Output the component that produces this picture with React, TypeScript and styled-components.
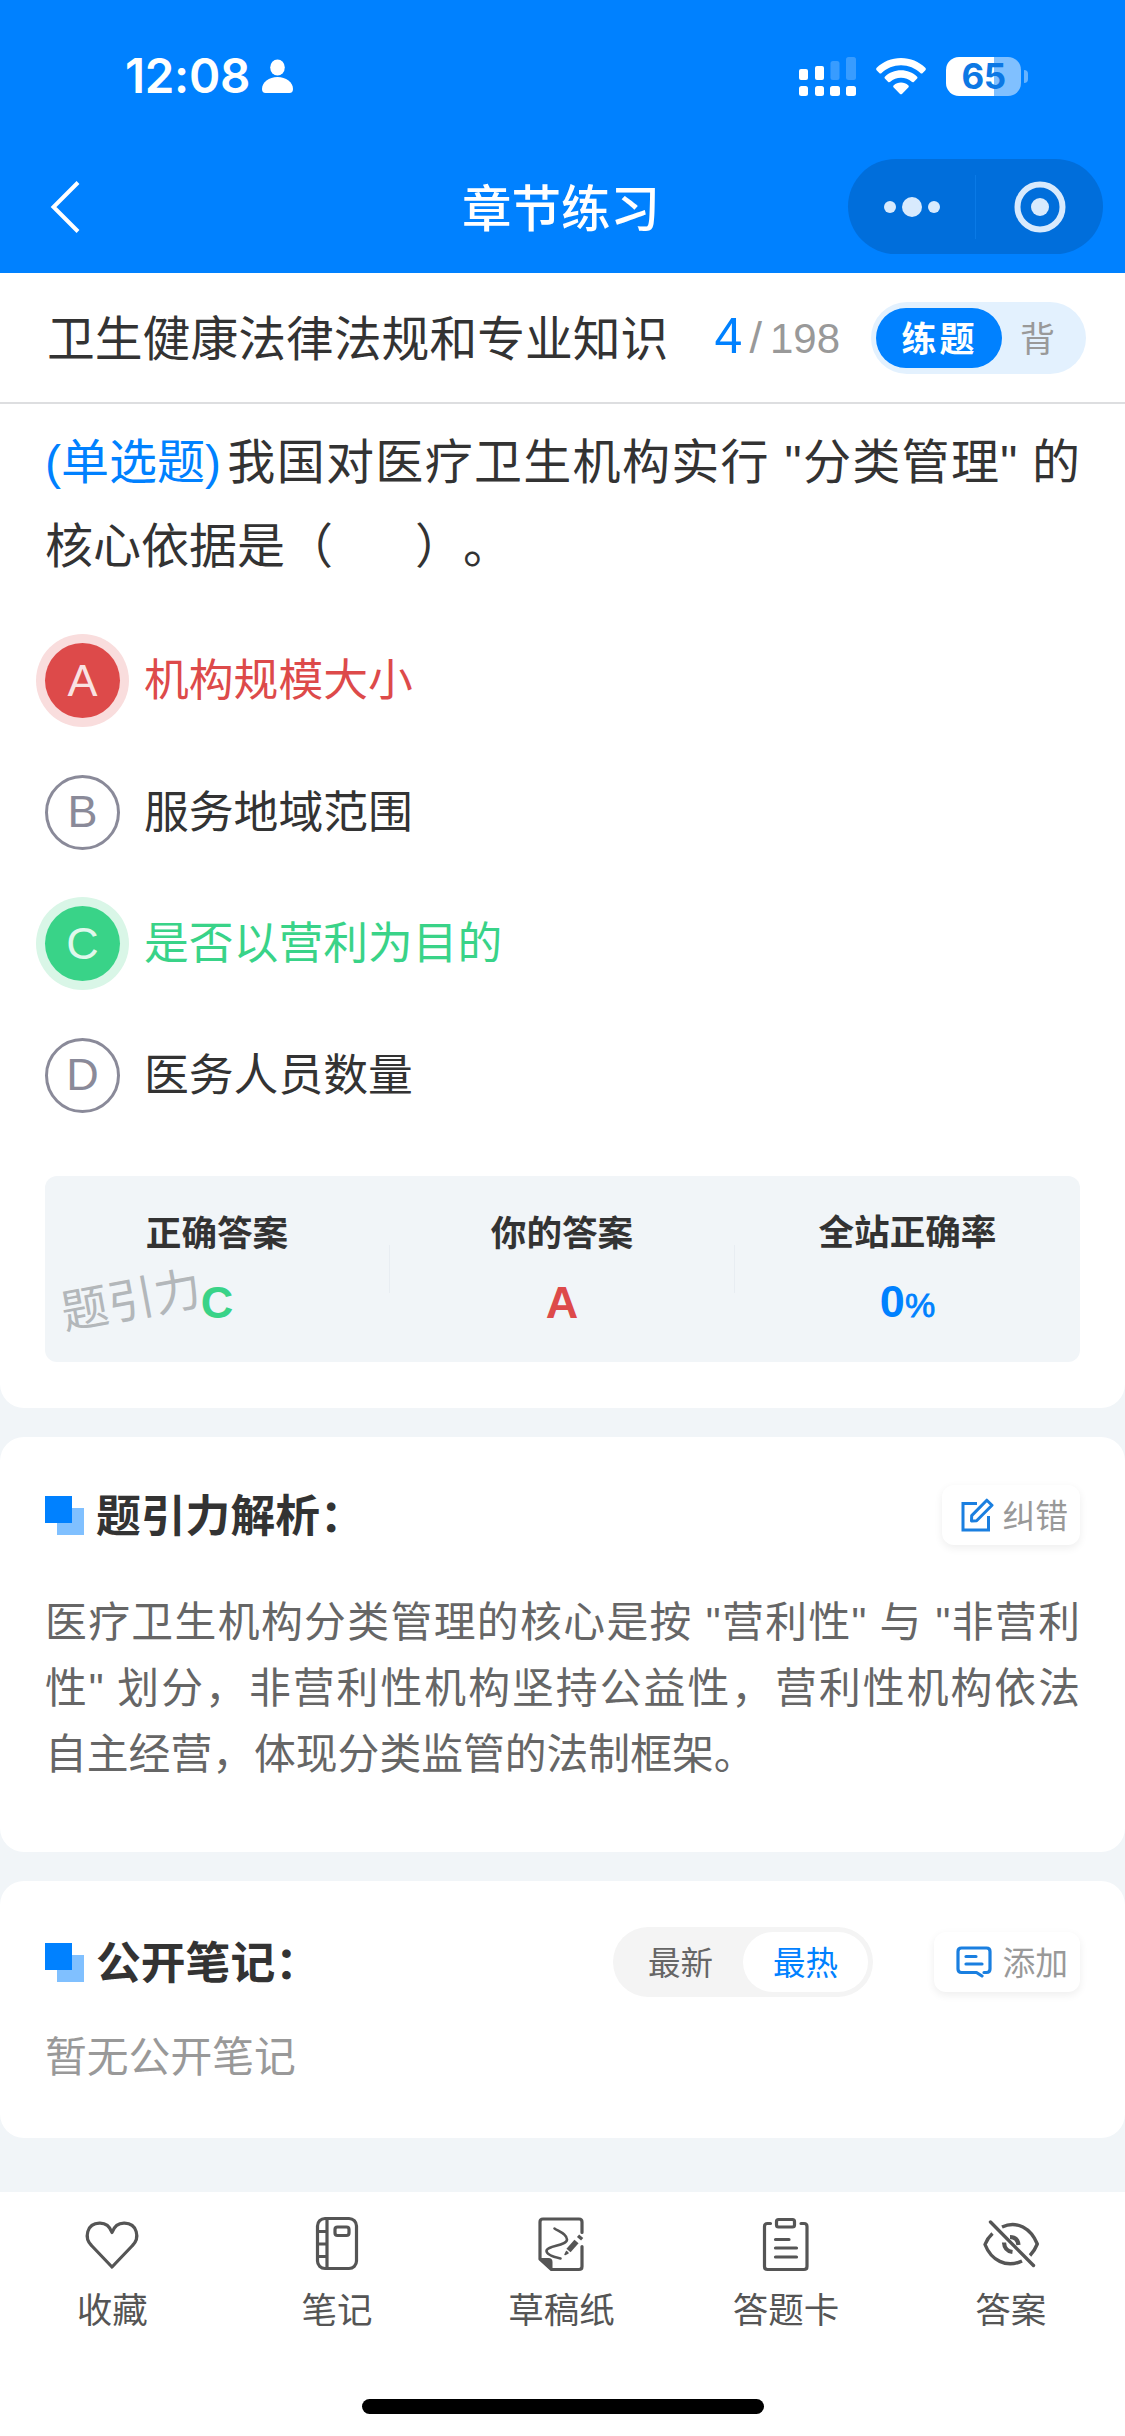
import React from 'react';
import styled, { createGlobalStyle, css } from 'styled-components';

const blue = '#0081ff';
const red = '#dd4a4a';
const green = '#39d388';

const GlobalStyle = createGlobalStyle`
  * { box-sizing: border-box; }
  body {
    margin: 0;
    background: #f1f5f8;
    font-family: 'Noto Sans CJK SC', 'Liberation Sans', sans-serif;
    text-spacing-trim: space-all;
    color: #333;
  }
`;

const Screen = styled.div`
  width: 1125px;
  height: 2436px;
  display: flex;
  flex-direction: column;
  overflow: hidden;
`;

const Header = styled.header`
  height: 273px;
  background: ${blue};
  color: #fff;
`;

const StatusBar = styled.div`
  height: 159px;
  padding: 0 97px 7px 125px;
  display: flex;
  align-items: center;
`;

const Clock = styled.span`
  font: 600 47.5px/56px Inter, sans-serif;
  letter-spacing: -0.3px;
  margin-right: 12px;
`;

const StatusIcons = styled.div`
  margin-left: auto;
  display: flex;
  align-items: center;
  gap: 20px;
`;

const Battery = styled.div`
  width: 75px;
  height: 39px;
  border-radius: 13px;
  background: linear-gradient(90deg, #fff 64%, #80c0ff 64%);
  color: #0c78e4;
  font: 700 35px/39px Inter, sans-serif;
  letter-spacing: -0.5px;
  text-align: center;
`;

const BatteryGroup = styled.div`
  display: flex;
  align-items: center;
  gap: 3px;
`;

const BatteryNub = styled.div`
  width: 4px;
  height: 13px;
  border-radius: 0 6px 6px 0;
  background: #66b3ff;
`;

const NavBar = styled.div`
  height: 95px;
  padding: 0 22px 0 48px;
  display: grid;
  grid-template-columns: 255px 1fr 255px;
  align-items: center;
`;

const NavTitle = styled.h1`
  margin: 0 29px 2px 0;
  font-size: 49.5px;
  font-weight: 500;
  line-height: 60px;
  text-align: center;
`;

const Capsule = styled.div`
  height: 95px;
  border-radius: 48px;
  background: #006edb;
  display: flex;
  align-items: center;
`;

const CapsuleHalf = styled.div<{ $divided?: boolean }>`
  flex: 1;
  height: 64px;
  display: flex;
  align-items: center;
  justify-content: center;
  ${(p) => p.$divided && css`border-right: 1px solid #0a7ae6;`}
`;

const ChapterBar = styled.div`
  height: 131px;
  background: #fff;
  border-bottom: 2px solid #dddee0;
  padding: 0 39px 0 47px;
  display: flex;
  align-items: center;
`;

const ChapterName = styled.div`
  font-size: 47.8px;
  line-height: 70px;
  padding-bottom: 3px;
  white-space: nowrap;
`;

const Progress = styled.div`
  margin-left: auto;
  display: flex;
  align-items: baseline;
  font-family: 'Liberation Sans', sans-serif;
  font-size: 42px;
  line-height: 60px;
  color: #999;
`;

const Current = styled.span`
  font-size: 50px;
  color: ${blue};
  margin-right: 7px;
`;

const Slash = styled.span`
  margin-right: 8px;
  font-size: 45px;
`;

const ModeSwitch = styled.div`
  width: 215px;
  height: 72px;
  margin-left: 31px;
  padding: 0 6px 0 5px;
  border-radius: 36px;
  background: #e3f1fe;
  display: flex;
  align-items: center;
`;

const ModeOption = styled.div<{ $active?: boolean }>`
  height: 60px;
  line-height: 58px;
  font-size: 35px;
  color: #999;
  padding-left: 18px;
  ${(p) =>
    p.$active &&
    css`
      width: 126px;
      padding: 0 0 0 1px;
      text-align: center;
      border-radius: 30px;
      background: ${blue};
      color: #fff;
      font-weight: 700;
      letter-spacing: 3px;
    `}
`;

const Card = styled.section<{ $height: number; $top?: number; $first?: boolean }>`
  height: ${(p) => p.$height}px;
  padding: ${(p) => p.$top ?? 0}px 45px 0;
  margin-bottom: 29px;
  background: #fff;
  border-radius: ${(p) => (p.$first ? '0 0 24px 24px' : '24px')};
`;

const Question = styled.p`
  margin: 0;
  padding-top: 17px;
  font-family: 'Liberation Sans', 'Noto Sans CJK SC', sans-serif;
  font-size: 48px;
  line-height: 84px;
  color: #333;
`;

const TextLine = styled.span<{ $fill?: boolean }>`
  display: block;
  white-space: nowrap;
  text-align-last: ${(p) => (p.$fill ? 'justify' : 'left')};
`;

const QuestionKind = styled.span`
  display: inline-block;
  text-align-last: left;
  color: ${blue};
  margin-right: 5px;
`;

const Blank = styled.span`
  display: inline-block;
  width: 82px;
`;

const Options = styled.div`
  margin-top: 26px;
  display: flex;
  flex-direction: column;
`;

type Tone = 'wrong' | 'right' | 'plain';
const toneColor = { wrong: red, right: green, plain: '#333' };
const haloColor = { wrong: '#f9dddd', right: '#d9f6e7', plain: 'transparent' };

const Option = styled.div<{ $tone: Tone }>`
  height: 131.6px;
  display: flex;
  align-items: center;
  gap: 24px;
  font-size: 44.8px;
  color: ${(p) => toneColor[p.$tone]};
`;

const Letter = styled.span<{ $tone: Tone }>`
  width: 75px;
  height: 75px;
  border-radius: 50%;
  font: 45px/75px 'Liberation Sans', sans-serif;
  text-align: center;
  ${(p) =>
    p.$tone === 'plain'
      ? css`
          border: 3px solid #8a8a99;
          color: #8a8a99;
          line-height: 68px;
        `
      : css`
          background: ${toneColor[p.$tone]};
          color: rgba(255, 255, 255, 0.85);
          box-shadow: 0 0 0 9px ${haloColor[p.$tone]};
        `}
`;

const OptionText = styled.span`
  line-height: 68px;
  padding-bottom: 7px;
`;

const Stats = styled.div`
  position: relative;
  height: 186px;
  margin-top: 35px;
  border-radius: 12px;
  background: #f1f5f8;
  display: grid;
  grid-template-columns: repeat(3, 1fr);
  align-items: center;
`;

const Stat = styled.div<{ $divided?: boolean }>`
  height: 48px;
  display: flex;
  flex-direction: column;
  align-items: center;
  justify-content: center;
  border-right: ${(p) => (p.$divided ? '1px solid #e8edf2' : '0')};
`;

const StatLabel = styled.div`
  font-size: 35.6px;
  font-weight: 700;
  line-height: 44px;
  color: #333;
`;

const StatValue = styled.div<{ $color: string }>`
  margin-top: 24px;
  font: 700 45px/52px 'Liberation Sans', sans-serif;
  color: ${(p) => p.$color};
  z-index: 1;
`;

const Percent = styled.span`
  font-size: 34px;
  font-weight: 400;
  -webkit-text-stroke: 0.8px currentColor;
`;

const Watermark = styled.span`
  position: absolute;
  left: 15px;
  top: 86px;
  font-size: 47px;
  line-height: 70px;
  color: #b3b7ba;
  transform: rotate(-10.5deg);
`;

const SectionHead = styled.div`
  height: 62px;
  display: flex;
  align-items: center;
`;

const Marker = styled.span`
  width: 39px;
  height: 39px;
  margin-right: 12px;
  background:
    linear-gradient(${blue}, ${blue}) 0 0 / 27px 27px no-repeat,
    linear-gradient(#80c0ff, #80c0ff) 12px 12px / 27px 27px no-repeat;
`;

const SectionTitle = styled.h2`
  margin: 0;
  padding-bottom: 4px;
  font-size: 44.8px;
  font-weight: 700;
  line-height: 58px;
  color: #333;
`;

const HeadActions = styled.div`
  margin-left: auto;
  display: flex;
  align-items: center;
`;

const ActionButton = styled.div<{ $width: number }>`
  width: ${(p) => p.$width}px;
  height: 60px;
  padding-right: 12px;
  border-radius: 12px;
  background: #fff;
  box-shadow: 0 3px 9px rgba(0, 0, 0, 0.07);
  display: flex;
  align-items: center;
  justify-content: flex-end;
  gap: 8px;
  font-size: 32.8px;
  line-height: 48px;
  color: #999;
`;

const ActionLabel = styled.span`
  padding-bottom: 2px;
`;

const SortSwitch = styled.div`
  width: 260px;
  height: 70px;
  margin-right: 61px;
  padding: 0 5px;
  border-radius: 35px;
  background: #f4f4f4;
  display: flex;
  align-items: center;
`;

const SortOption = styled.div<{ $active?: boolean }>`
  width: 125px;
  height: 60px;
  line-height: 58px;
  border-radius: 30px;
  font-size: 32.5px;
  text-align: center;
  color: ${(p) => (p.$active ? blue : '#666')};
  background: ${(p) => (p.$active ? '#fff' : 'transparent')};
`;

const Analysis = styled.p`
  margin: 44px 0 0;
  font-family: 'Liberation Sans', 'Noto Sans CJK SC', sans-serif;
  font-size: 41.8px;
  line-height: 66px;
  color: #666;
`;

const EmptyNote = styled.p`
  margin: 30px 0 0;
  font-size: 41.8px;
  line-height: 62px;
  color: #999;
`;

const TabBar = styled.nav`
  margin-top: 25px;
  flex: 1;
  background: #fff;
  display: flex;
  flex-direction: column;
  align-items: center;
`;

const Tabs = styled.div`
  width: 100%;
  height: 207px;
  padding: 22px 2px 0 0;
  display: grid;
  grid-template-columns: repeat(5, 1fr);
`;

const Tab = styled.div`
  display: flex;
  flex-direction: column;
  align-items: center;
  gap: 7px;
  font-size: 35.5px;
  line-height: 54px;
  color: #555;
`;

const HomeIndicator = styled.div`
  width: 402px;
  height: 15px;
  border-radius: 8px;
  background: #000;
`;

const PersonIcon = () => (
  <svg width="31" height="34" viewBox="0 0 31 34" fill="#fff">
    <ellipse cx="15.500" cy="8.500" rx="7.300" ry="8" />
    <path d="M0 30c0-7 7-12 15.500-12S31 23 31 30c0 2.500-1.200 4-3.500 4h-24C1.200 34 0 32.500 0 30z" />
  </svg>
);

const SignalIcon = () => (
  <svg width="57" height="39" viewBox="0 0 57 39" fill="#fff">
    <rect x="0" y="12" width="9" height="11" rx="2" />
    <rect x="16" y="9" width="9" height="14" rx="2" />
    <rect x="31.500" y="4" width="9" height="19" rx="2.500" opacity=".22" />
    <rect x="47" y="0" width="10" height="23" rx="2.500" opacity=".22" />
    <rect x="0" y="29" width="9" height="10" rx="2.500" />
    <rect x="16" y="29" width="9" height="10" rx="2.500" />
    <rect x="31" y="29" width="10" height="10" rx="2.500" />
    <rect x="47" y="29" width="10" height="10" rx="2.500" />
  </svg>
);

const WifiIcon = () => (
  <svg width="50" height="37" viewBox="0 0 50 37" fill="#fff">
    <path d="M25 0C34.500 0 43 3.700 49.300 9.700c.8.800.8 1.700.1 2.500l-2.700 2.800c-.7.700-1.600.7-2.300 0C39.300 10.200 32.500 7.300 25 7.300S10.700 10.200 5.600 15c-.7.700-1.600.7-2.300 0L.6 12.200c-.7-.8-.7-1.700.1-2.500C7 3.700 15.500 0 25 0z" />
    <path d="M25 12.200c6.200 0 11.700 2.300 15.900 6.200.8.700.8 1.600 0 2.400l-2.900 2.900c-.7.700-1.500.7-2.300.1-2.900-2.600-6.600-4.100-10.700-4.100s-7.800 1.500-10.700 4.100c-.8.600-1.600.6-2.300-.1l-2.900-2.900c-.8-.8-.8-1.700 0-2.400 4.200-3.900 9.700-6.200 15.900-6.200z" />
    <path d="M25 24.500c2.800 0 5.300 1 7.200 2.700.8.700.8 1.500.1 2.300l-6.100 6.200c-.8.800-1.600.8-2.400 0l-6.100-6.200c-.7-.8-.7-1.600.1-2.300 1.900-1.700 4.400-2.700 7.200-2.700z" />
  </svg>
);

const BackIcon = () => (
  <svg width="34" height="54" viewBox="0 0 34 54" fill="none" stroke="#fff" strokeWidth="4">
    <path d="M30 2.500L5.500 27L30 51.500" />
  </svg>
);

const MoreIcon = () => (
  <svg width="56" height="22" viewBox="0 0 56 22" fill="#d8eafd">
    <circle cx="6" cy="11" r="6" />
    <circle cx="28" cy="11" r="10" />
    <circle cx="50" cy="11" r="6" />
  </svg>
);

const TargetIcon = () => (
  <svg width="52" height="52" viewBox="0 0 52 52">
    <circle cx="26" cy="26" r="22.500" fill="none" stroke="#d8eafd" strokeWidth="6" />
    <circle cx="26" cy="26" r="9" fill="#d8eafd" />
  </svg>
);

const EditIcon = () => (
  <svg width="33" height="34" viewBox="0 0 33 34" fill="none" stroke="#1a7fe0" strokeWidth="3">
    <path d="M16 5.500H2V32H27.500V18" />
    <path d="M25.800 2.200L31 7.300L15.600 22.800L10.500 23L10.700 17.600Z" strokeLinejoin="round" />
  </svg>
);

const CommentIcon = () => (
  <svg width="38" height="32" viewBox="0 0 38 32" fill="none" stroke="#1a7fe0" strokeWidth="3.200" strokeLinecap="round" strokeLinejoin="round">
    <path d="M28 26.500H30.500Q34 26.500 34 23V5.500Q34 2 30.500 2H5.500Q2 2 2 5.500V23Q2 26.500 5.500 26.500H20.500L26 30" />
    <path d="M10 10.500H20M10 18H26" />
  </svg>
);

const tabStroke = { fill: 'none', stroke: '#555', strokeWidth: 3.2, strokeLinecap: 'round' as const, strokeLinejoin: 'round' as const };

const HeartIcon = () => (
  <svg width="60" height="60" viewBox="0 0 60 60" {...tabStroke}>
    <path d="M30 53L9.500 31.500C2 24 4.500 9.500 17.500 9.200C23.500 9 28 13 30 18.500C32 13 36.500 9 42.500 9.200C55.500 9.500 58 24 50.500 31.500Z" />
  </svg>
);

const NotebookIcon = () => (
  <svg width="60" height="60" viewBox="0 0 60 60" {...tabStroke}>
    <rect x="10.500" y="4.500" width="39" height="50" rx="7.500" />
    <path d="M20 4.500V54.500M11 17.500H20M11 30H20M11 42.500H20" />
    <rect x="28" y="13" width="14" height="8.500" rx="2.500" />
  </svg>
);

const DraftIcon = () => (
  <svg width="60" height="60" viewBox="0 0 60 60" {...tabStroke}>
    <path d="M51 18.500V8Q51 5 48 5H12Q9 5 9 8V45L20.500 55.500H48Q51 55.500 51 52.500V32.500" />
    <path d="M9 45H17.500Q20.500 45 20.500 48V55.500Z" fill="#555" strokeWidth="2" />
    <path d="M23.500 14.500C28 17.500 36 20 36 25.500C36 32 15.500 31.500 15.500 37C15.500 41 23 43 29.500 44.500" strokeWidth="2.600" />
    <path d="M37.500 36.500L45.500 27.500" strokeWidth="5.500" strokeLinecap="butt" />
    <path d="M48 24.800L50.200 22.300" strokeWidth="5.500" strokeLinecap="butt" />
    <path d="M34 40.500L35.500 37.500L37 39Z" strokeWidth="1.500" fill="#555" />
  </svg>
);

const AnswerSheetIcon = () => (
  <svg width="60" height="60" viewBox="0 0 60 60" {...tabStroke}>
    <path d="M14.500 9.500H11.500Q8.500 9.500 8.500 12.500V52.500Q8.500 55.500 11.500 55.500H48Q51 55.500 51 52.500V12.500Q51 9.500 48 9.500H45" />
    <rect x="20.500" y="5.500" width="18" height="7.500" rx="2" />
    <path d="M19.500 25.500H33M19.500 34H40.500M19.500 43H40.500" />
  </svg>
);

const EyeOffIcon = () => (
  <svg width="60" height="60" viewBox="0 0 60 60" {...tabStroke}>
    <path d="M9.500 8L52.500 51.500" strokeWidth="3.400" />
    <path d="M21 13C36 6 50 14.500 56.300 30Q53.500 37 49 41.500" strokeLinecap="butt" strokeWidth="3.400" />
    <path d="M11.500 19.500Q6.500 24 4 30.500C10 46 25 54.500 41 47" strokeLinecap="butt" strokeWidth="3.400" />
    <path d="M29 23Q36.500 23 37.500 31M23 28.500Q23.500 37 31.500 38" strokeLinecap="butt" strokeWidth="4.200" />
  </svg>
);

const options: { letter: string; text: string; tone: Tone }[] = [
  { letter: 'A', text: '机构规模大小', tone: 'wrong' },
  { letter: 'B', text: '服务地域范围', tone: 'plain' },
  { letter: 'C', text: '是否以营利为目的', tone: 'right' },
  { letter: 'D', text: '医务人员数量', tone: 'plain' },
];

const tabs = [
  { label: '收藏', Icon: HeartIcon },
  { label: '笔记', Icon: NotebookIcon },
  { label: '草稿纸', Icon: DraftIcon },
  { label: '答题卡', Icon: AnswerSheetIcon },
  { label: '答案', Icon: EyeOffIcon },
];

export default function App() {
  return (
    <>
      <GlobalStyle />
      <Screen>
        <Header>
          <StatusBar>
            <Clock>12:08</Clock>
            <PersonIcon />
            <StatusIcons>
              <SignalIcon />
              <WifiIcon />
              <BatteryGroup>
                <Battery>65</Battery>
                <BatteryNub />
              </BatteryGroup>
            </StatusIcons>
          </StatusBar>
          <NavBar>
            <BackIcon />
            <NavTitle>章节练习</NavTitle>
            <Capsule>
              <CapsuleHalf $divided>
                <MoreIcon />
              </CapsuleHalf>
              <CapsuleHalf>
                <TargetIcon />
              </CapsuleHalf>
            </Capsule>
          </NavBar>
        </Header>

        <ChapterBar>
          <ChapterName>卫生健康法律法规和专业知识</ChapterName>
          <Progress>
            <Current>4</Current>
            <Slash>/</Slash>198
          </Progress>
          <ModeSwitch>
            <ModeOption $active>练题</ModeOption>
            <ModeOption>背</ModeOption>
          </ModeSwitch>
        </ChapterBar>

        <Card $height={1004} $first>
          <Question>
            <TextLine $fill>
              <QuestionKind>(单选题)</QuestionKind>我国对医疗卫生机构实行 "分类管理" 的
            </TextLine>
            <TextLine>
              核心依据是（<Blank />）。
            </TextLine>
          </Question>
          <Options>
            {options.map((o) => (
              <Option key={o.letter} $tone={o.tone}>
                <Letter $tone={o.tone}>{o.letter}</Letter>
                <OptionText>{o.text}</OptionText>
              </Option>
            ))}
          </Options>
          <Stats>
            <Watermark>题引力</Watermark>
            <Stat $divided>
              <StatLabel>正确答案</StatLabel>
              <StatValue $color={green}>C</StatValue>
            </Stat>
            <Stat $divided>
              <StatLabel>你的答案</StatLabel>
              <StatValue $color={red}>A</StatValue>
            </Stat>
            <Stat>
              <StatLabel>全站正确率</StatLabel>
              <StatValue $color={blue}>
                0<Percent>%</Percent>
              </StatValue>
            </Stat>
          </Stats>
        </Card>

        <Card $height={415} $top={47}>
          <SectionHead>
            <Marker />
            <SectionTitle>题引力解析：</SectionTitle>
            <HeadActions>
              <ActionButton $width={138}>
                <EditIcon />
                <ActionLabel>纠错</ActionLabel>
              </ActionButton>
            </HeadActions>
          </SectionHead>
          <Analysis>
            <TextLine $fill>医疗卫生机构分类管理的核心是按 "营利性" 与 "非营利</TextLine>
            <TextLine $fill>性" 划分，非营利性机构坚持公益性，营利性机构依法</TextLine>
            <TextLine>自主经营，体现分类监管的法制框架。</TextLine>
          </Analysis>
        </Card>

        <Card $height={257} $top={50}>
          <SectionHead>
            <Marker />
            <SectionTitle>公开笔记：</SectionTitle>
            <HeadActions>
              <SortSwitch>
                <SortOption>最新</SortOption>
                <SortOption $active>最热</SortOption>
              </SortSwitch>
              <ActionButton $width={146}>
                <CommentIcon />
                <ActionLabel>添加</ActionLabel>
              </ActionButton>
            </HeadActions>
          </SectionHead>
          <EmptyNote>暂无公开笔记</EmptyNote>
        </Card>

        <TabBar>
          <Tabs>
            {tabs.map(({ label, Icon }) => (
              <Tab key={label}>
                <Icon />
                {label}
              </Tab>
            ))}
          </Tabs>
          <HomeIndicator />
        </TabBar>
      </Screen>
    </>
  );
}
